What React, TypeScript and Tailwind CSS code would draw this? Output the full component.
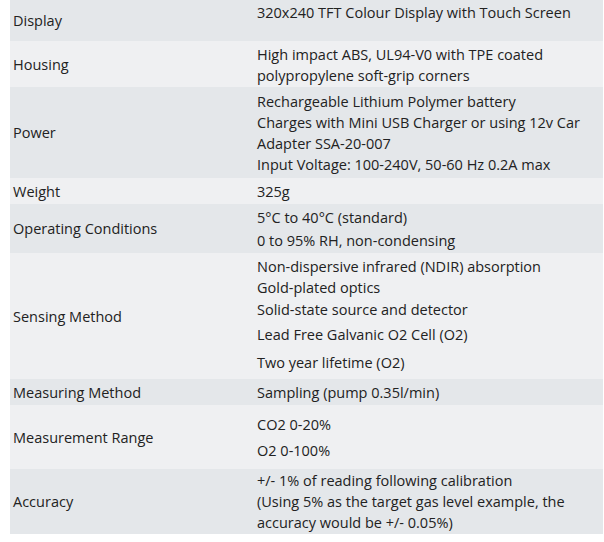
const ROWS: {
    label: string
    dark: boolean
    cell: string
    lines: { text: string; cls?: string }[]
}[] = [
    {
        label: "Display",
        dark: true,
        cell: "pt-[2px] pb-[18px]",
        lines: [{ text: "320x240 TFT Colour Display with Touch Screen" }],
    },
    {
        label: "Housing",
        dark: false,
        cell: "pt-[3px] pb-[1px]",
        lines: [
            { text: "High impact ABS, UL94-V0 with TPE coated" },
            { text: "polypropylene soft-grip corners" },
        ],
    },
    {
        label: "Power",
        dark: true,
        cell: "pt-[4px] pb-[3px]",
        lines: [
            { text: "Rechargeable Lithium Polymer battery" },
            { text: "Charges with Mini USB Charger or using 12v Car" },
            { text: "Adapter SSA-20-007" },
            { text: "Input Voltage: 100-240V, 50-60 Hz 0.2A max" },
        ],
    },
    {
        label: "Weight",
        dark: false,
        cell: "py-[2.5px]",
        lines: [{ text: "325g" }],
    },
    {
        label: "Operating Conditions",
        dark: true,
        cell: "pt-[2.5px] pb-[2.5px]",
        lines: [
            { text: "5°C to 40°C (standard)" },
            { text: "0 to 95% RH, non-condensing", cls: "mt-[2px]" },
        ],
    },
    {
        label: "Sensing Method",
        dark: false,
        cell: "pt-[3px] pb-[6px]",
        lines: [
            { text: "Non-dispersive infrared (NDIR) absorption" },
            { text: "Gold-plated optics" },
            { text: "Solid-state source and detector", cls: "mt-[1px]" },
            { text: "Lead Free Galvanic O2 Cell (O2)", cls: "mt-[4px]" },
            { text: "Two year lifetime (O2)", cls: "mt-[7px]" },
        ],
    },
    {
        label: "Measuring Method",
        dark: true,
        cell: "py-[2.5px]",
        lines: [{ text: "Sampling (pump 0.35l/min)" }],
    },
    {
        label: "Measurement Range",
        dark: false,
        cell: "pt-[8.5px] pb-[8px]",
        lines: [
            { text: "CO2 0-20%" },
            { text: "O2 0-100%", cls: "mt-[5.5px]" },
        ],
    },
    {
        label: "Accuracy",
        dark: true,
        cell: "pt-[1px] pb-[1px]",
        lines: [
            { text: "+/- 1% of reading following calibration" },
            { text: "(Using 5% as the target gas level example, the" },
            { text: "accuracy would be +/- 0.05%)" },
        ],
    },
]

export default function App() {
    return (
        <div className="w-[604px] h-[542px] bg-white font-['Open_Sans',sans-serif] text-[14.5px] text-[#222]">
            <div className="ml-[10px] w-[593px] flex flex-col">
                {ROWS.map(row => (
                    <div
                        key={row.label}
                        className={`flex ${row.dark ? "bg-[#e4e7ea]" : "bg-[#eff0f2]"}`}
                    >
                        <div className="w-[244px] shrink-0 pl-[3px] flex items-center leading-[21px]">
                            {row.label}
                        </div>
                        <div className={`flex-1 pl-[3px] flex flex-col ${row.cell}`}>
                            {row.lines.map(line => (
                                <div key={line.text} className={`leading-[21px] h-[21px] whitespace-nowrap ${line.cls ?? ""}`}>
                                    {line.text}
                                </div>
                            ))}
                        </div>
                    </div>
                ))}
            </div>
        </div>
    )
}
